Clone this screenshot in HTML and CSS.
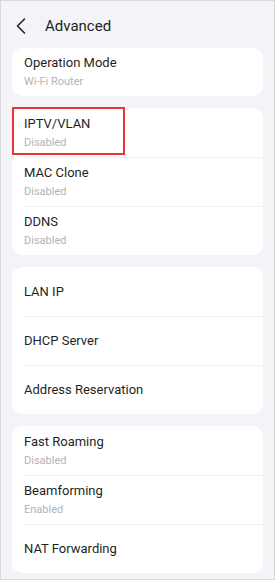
FILE: index.html
```html
<!DOCTYPE html>
<html lang="en">
<head>
  <meta charset="UTF-8">
  <meta name="viewport" content="width=device-width, initial-scale=1.0">
  <title>Advanced</title>
  <link rel="stylesheet" href="styles.css">
</head>
<body>
  <div class="screen">
    <div class="header">
      <svg class="back-icon" width="10" height="16" viewBox="0 0 10 16">
        <path d="M8.5 1 L1.5 8 L8.5 15" fill="none" stroke="#222" stroke-width="1.6" stroke-linecap="round" stroke-linejoin="round"/>
      </svg>
      <h1>Advanced</h1>
    </div>

    <div class="card">
      <div class="row short">
        <span class="row-title">Operation Mode</span>
        <span class="row-value">Wi-Fi Router</span>
      </div>
    </div>

    <div class="card">
      <div class="row">
        <span class="row-title">IPTV/VLAN</span>
        <span class="row-value">Disabled</span>
        <span class="highlight-box"></span>
      </div>
      <div class="row">
        <span class="row-title">MAC Clone</span>
        <span class="row-value">Disabled</span>
      </div>
      <div class="row">
        <span class="row-title">DDNS</span>
        <span class="row-value">Disabled</span>
      </div>
    </div>

    <div class="card">
      <div class="row">
        <span class="row-title">LAN IP</span>
      </div>
      <div class="row">
        <span class="row-title">DHCP Server</span>
      </div>
      <div class="row">
        <span class="row-title">Address Reservation</span>
      </div>
    </div>

    <div class="card">
      <div class="row">
        <span class="row-title">Fast Roaming</span>
        <span class="row-value">Disabled</span>
      </div>
      <div class="row">
        <span class="row-title">Beamforming</span>
        <span class="row-value">Enabled</span>
      </div>
      <div class="row">
        <span class="row-title">NAT Forwarding</span>
      </div>
    </div>
  </div>
</body>
</html>
```

FILE: styles.css
```css
html, body {
  margin: 0;
  padding: 0;
}

body {
  font-family: Roboto, 'Noto Sans', sans-serif;
  color: #222;
  width: 275px;
  height: 580px;
}

.screen {
  box-sizing: border-box;
  width: 275px;
  height: 580px;
  background: #f3f4f8;
  border: 1px solid #d9d9dc;
  padding: 0 11px;
  display: flex;
  flex-direction: column;
  gap: 12px;
}

.header {
  height: 47px;
  box-sizing: border-box;
  padding: 3px 0 0 4px;
  margin-bottom: -12px;
  display: flex;
  align-items: center;
}

.back-icon {
  display: block;
}

h1 {
  margin: 0 0 0 19px;
  font-size: 15px;
  font-weight: 400;
  color: #1f1f1f;
  line-height: 20px;
}

.card {
  background: #fff;
  border-radius: 10px;
}

.row {
  position: relative;
  height: 49px;
  box-sizing: border-box;
  padding-left: 12px;
  display: flex;
  flex-direction: column;
  justify-content: center;
  gap: 2px;
}

.row.short {
  height: 48px;
}

.row + .row::before {
  content: "";
  position: absolute;
  top: 0;
  left: 12px;
  right: 0;
  border-top: 1px solid #f0f0f2;
}

.row-title {
  font-size: 13px;
  line-height: 18px;
  color: #1f1f1f;
}

.row-value {
  font-size: 11px;
  line-height: 16px;
  color: #b3b3b3;
}

.highlight-box {
  position: absolute;
  left: 0;
  top: -1px;
  width: 113px;
  height: 48px;
  box-sizing: border-box;
  border: 2px solid #e8343a;
}
```
